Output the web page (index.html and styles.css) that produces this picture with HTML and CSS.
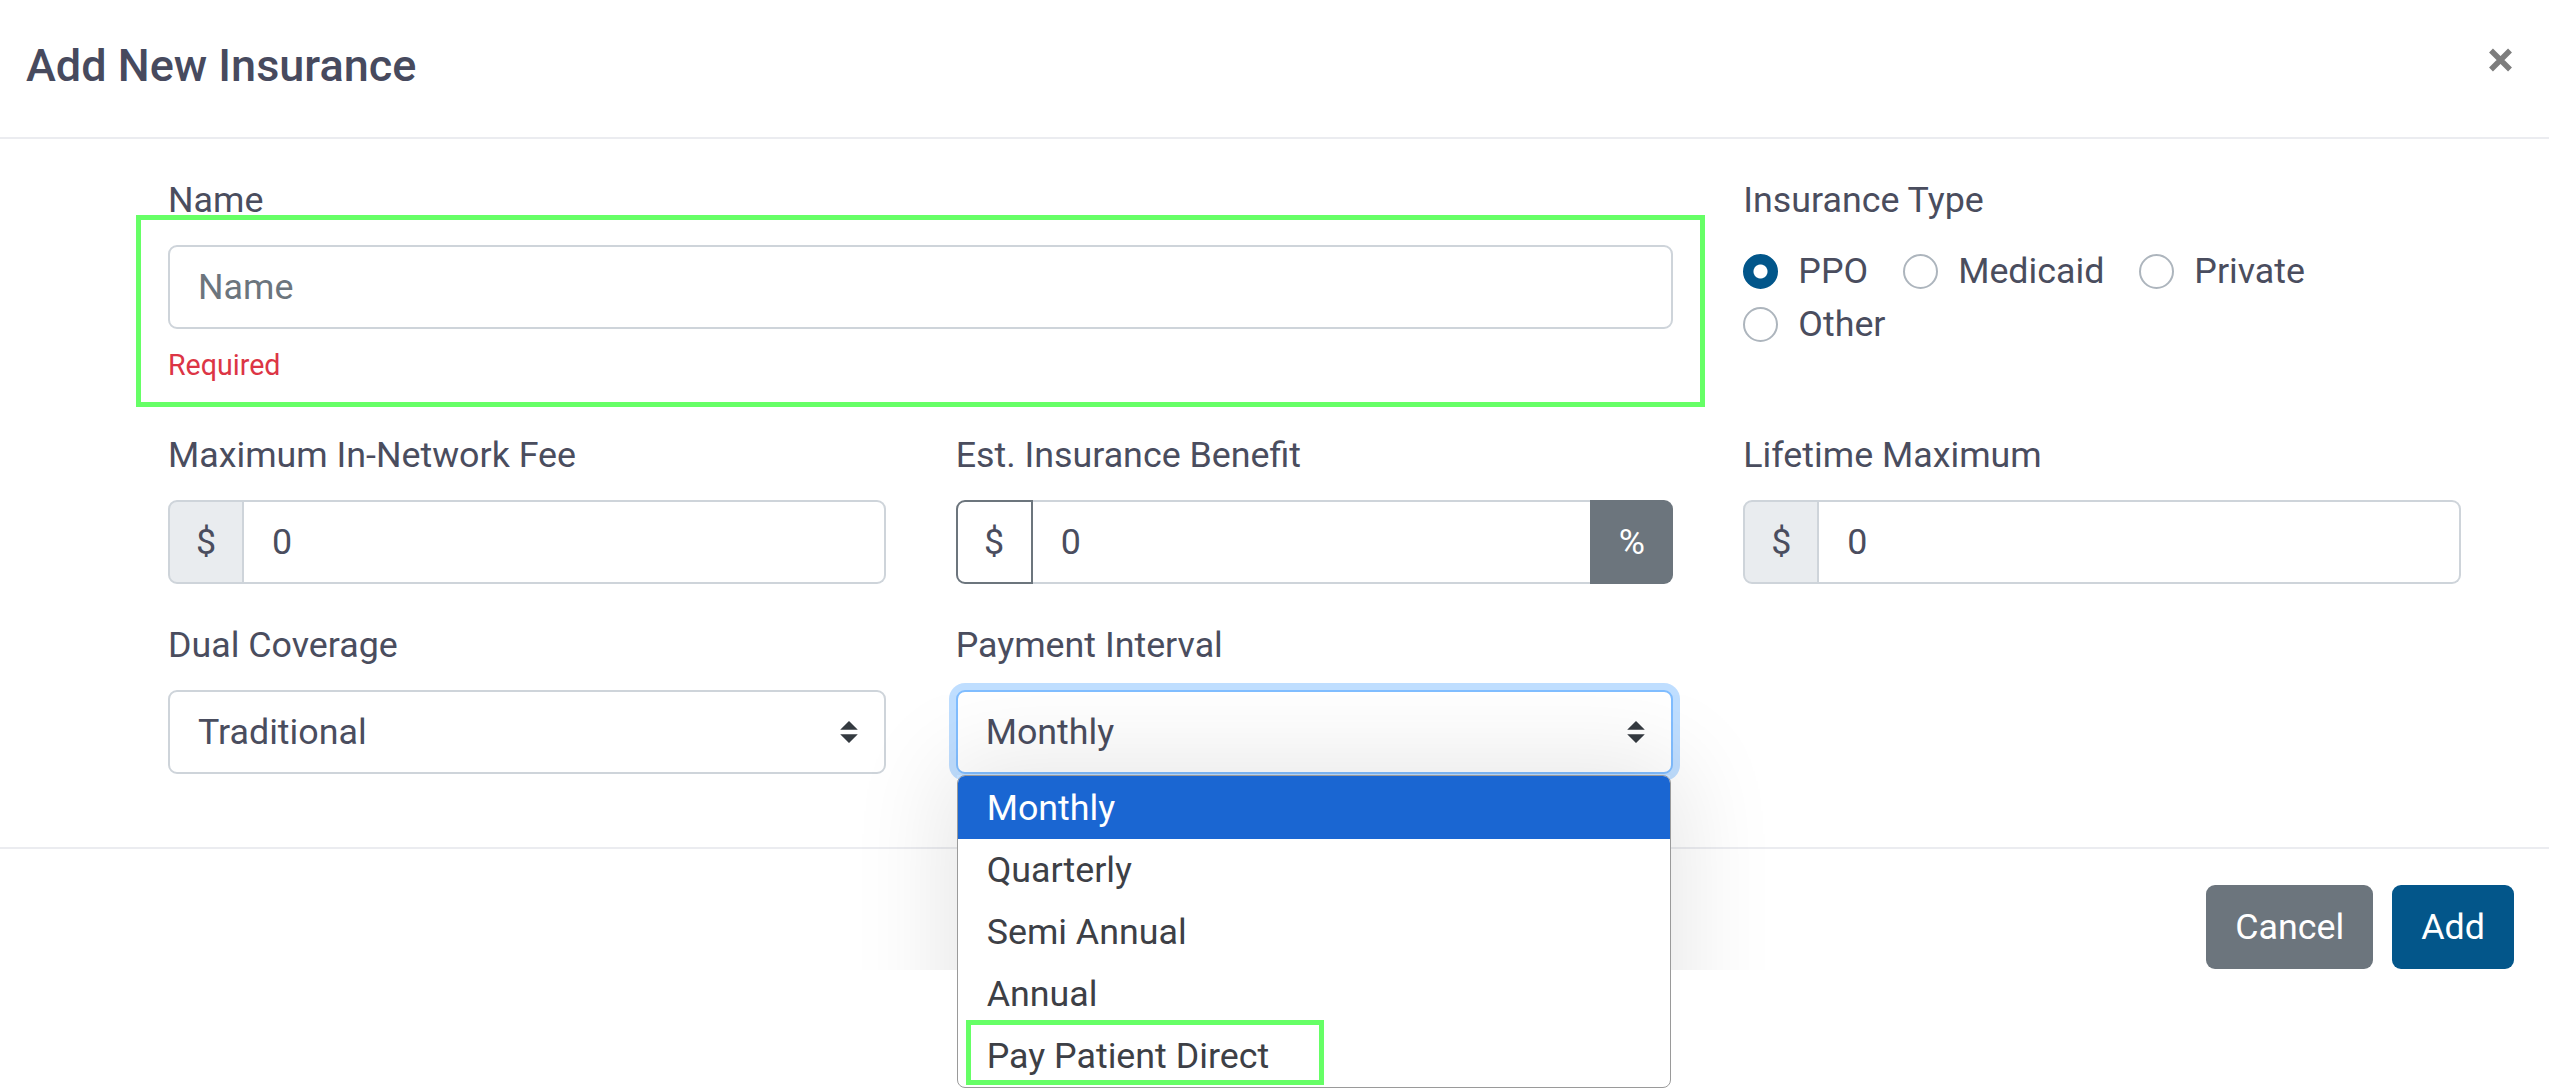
FILE: index.html
```html
<!DOCTYPE html>
<html lang="en">
  <head>
    <meta charset="UTF-8" />
    <meta name="viewport" content="width=device-width, initial-scale=1.0" />
    <title>Add New Insurance</title>
    <link rel="stylesheet" href="styles.css">
  </head>

  <body>
    <div class="modal">
      <div class="modal-header">
        <h1 class="modal-title">Add New Insurance</h1>
        <button class="close" type="button" aria-label="Close">
          <svg width="25" height="24" viewBox="0 0 25 24">
            <path d="M3 2.5L22 21.5M22 2.5L3 21.5" stroke="#7d7d7d" stroke-width="5.5" fill="none" />
          </svg>
        </button>
      </div>

      <div class="modal-body">
        <form class="form-grid">
          <div class="group group-wide">
            <label class="label" for="name">Name</label>
            <input class="control" id="name" type="text" placeholder="Name" />
            <div class="feedback">Required</div>
            <div class="mark mark-name"></div>
          </div>

          <div class="group">
            <span class="label">Insurance Type</span>
            <div class="radios">
              <div class="radio"><span class="dot checked"></span>PPO</div>
              <div class="radio"><span class="dot"></span>Medicaid</div>
              <div class="radio"><span class="dot"></span>Private</div>
              <div class="radio"><span class="dot"></span>Other</div>
            </div>
          </div>

          <div class="group">
            <label class="label" for="maxfee">Maximum In-Network Fee</label>
            <div class="input-group">
              <span class="addon">$</span>
              <input class="control" id="maxfee" type="text" value="0" />
            </div>
          </div>

          <div class="group">
            <label class="label" for="benefit">Est. Insurance Benefit</label>
            <div class="input-group">
              <span class="addon addon-outline">$</span>
              <input class="control control-mid" id="benefit" type="text" value="0" />
              <span class="addon addon-dark">%</span>
            </div>
          </div>

          <div class="group">
            <label class="label" for="lifetime">Lifetime Maximum</label>
            <div class="input-group">
              <span class="addon">$</span>
              <input class="control" id="lifetime" type="text" value="0" />
            </div>
          </div>

          <div class="group">
            <span class="label">Dual Coverage</span>
            <div class="control select">
              <span>Traditional</span>
              <svg class="caret" width="18" height="22" viewBox="0 0 4 5">
                <path d="M2 0L0 2h4zm0 5L0 3h4z" fill="#343a40" />
              </svg>
            </div>
          </div>

          <div class="group">
            <span class="label">Payment Interval</span>
            <div class="select-field">
              <div class="control select focused">
                <span>Monthly</span>
                <svg class="caret" width="18" height="22" viewBox="0 0 4 5">
                  <path d="M2 0L0 2h4zm0 5L0 3h4z" fill="#343a40" />
                </svg>
              </div>
              <div class="shade-clip"><div class="shade"></div></div>
              <div class="dropdown">
                <div class="option active">Monthly</div>
                <div class="option">Quarterly</div>
                <div class="option">Semi Annual</div>
                <div class="option">Annual</div>
                <div class="option">Pay Patient Direct</div>
                <div class="mark mark-option"></div>
              </div>
            </div>
          </div>
        </form>
      </div>

      <div class="modal-footer">
        <button class="btn btn-cancel" type="button">Cancel</button>
        <button class="btn btn-add" type="button">Add</button>
      </div>
    </div>
  </body>
</html>
```

FILE: styles.css
```css
html {
  overflow: hidden;
}
body {
  margin: 0;
  min-height: 1089px;
  background: #fff;
  font-family: Roboto, "Liberation Sans", Arial, sans-serif;
  color: #4a4d5e;
}
.modal {
  width: 2549px;
}
.modal-header {
  display: flex;
  justify-content: space-between;
  align-items: flex-start;
  padding: 33px 36px 38px 26px;
  border-bottom: 2px solid #ebecf0;
}
.modal-title {
  margin: 0;
  font-size: 45px;
  line-height: 66px;
  font-weight: 500;
  color: #474a5e;
}
.close {
  border: 0;
  background: none;
  padding: 0;
  margin-top: 15px;
  line-height: 0;
}
.modal-body {
  padding: 35px 88px 38px 168px;
}
.form-grid {
  display: grid;
  grid-template-columns: repeat(3, 1fr);
  column-gap: 70px;
  margin: 0;
}
.group {
  position: relative;
  margin-bottom: 35px;
}
.group-wide {
  grid-column: span 2;
  margin-bottom: 43px;
}
.label {
  display: block;
  font-size: 35.8px;
  line-height: 53px;
  margin-bottom: 18px;
}
.control {
  box-sizing: border-box;
  width: 100%;
  height: 84px;
  border: 2px solid #ced4da;
  border-radius: 9px;
  padding: 0 28px;
  background: #fff;
  font-family: Roboto, "Liberation Sans", Arial, sans-serif;
  font-size: 35.8px;
  color: #4a4d5e;
  outline: none;
}
.control::placeholder {
  color: #6c757d;
}
.feedback {
  margin-top: 15px;
  font-size: 28.6px;
  line-height: 42px;
  color: #dc3545;
}
.radios {
  display: flex;
  flex-wrap: wrap;
  column-gap: 35px;
}
.radio {
  display: flex;
  align-items: center;
  gap: 20px;
  font-size: 35.8px;
  line-height: 53px;
}
.dot {
  box-sizing: border-box;
  width: 35px;
  height: 35px;
  border-radius: 50%;
  border: 2px solid #adb5bd;
  background: #fff;
}
.dot.checked {
  border-color: #02568a;
  background: radial-gradient(circle, #fff 0 6.5px, #02568a 7.5px);
}
.input-group {
  display: flex;
}
.input-group .control {
  flex: 1;
  min-width: 0;
  border-left: 0;
  border-radius: 0 9px 9px 0;
}
.input-group .control-mid {
  border-right: 0;
  border-radius: 0;
}
.addon {
  box-sizing: border-box;
  width: 76px;
  height: 84px;
  display: flex;
  align-items: center;
  justify-content: center;
  border: 2px solid #ced4da;
  border-radius: 9px 0 0 9px;
  background: #e9ecef;
  font-size: 35.8px;
  color: #4a4d5e;
}
.addon-outline {
  width: 77px;
  background: #fff;
  border-color: #6c757d;
}
.addon-dark {
  width: 83px;
  border: 0;
  border-radius: 0 9px 9px 0;
  background: #6c757d;
  color: #fff;
}
.select {
  display: flex;
  align-items: center;
  justify-content: space-between;
  padding-right: 26px;
}
.focused {
  border-color: #80bdff;
  box-shadow: 0 0 0 7px rgba(0, 123, 255, 0.25);
}
.select-field {
  position: relative;
}
.shade-clip {
  position: absolute;
  top: 5px;
  left: -200px;
  right: -200px;
  height: 275px;
  overflow: hidden;
  pointer-events: none;
}
.shade {
  position: absolute;
  top: 80px;
  left: 201px;
  right: 203px;
  height: 400px;
  box-shadow: 0 0 90px 12px rgba(0, 0, 0, 0.1);
}
.dropdown {
  position: absolute;
  top: 85px;
  left: 1px;
  width: 714px;
  box-sizing: border-box;
  border: 1px solid #9a9a9a;
  border-radius: 8px;
  background: #fff;
  overflow: hidden;
}
.option {
  height: 62px;
  padding-left: 29px;
  display: flex;
  align-items: center;
  font-size: 35.8px;
  color: #3d4046;
}
.option.active {
  height: 63px;
  background: #1a66d2;
  color: #fff;
}
.mark {
  position: absolute;
  box-sizing: border-box;
  border: 5px solid #66ff66;
  pointer-events: none;
}
.mark-name {
  left: -32px;
  top: 41px;
  width: 1569px;
  height: 192px;
}
.mark-option {
  left: 8px;
  top: 244px;
  width: 358px;
  height: 65px;
}
.modal-footer {
  display: flex;
  justify-content: flex-end;
  gap: 19px;
  padding: 36px 35px;
  border-top: 2px solid #ebecf0;
}
.btn {
  height: 84px;
  padding: 0 29px;
  border: 0;
  border-radius: 9px;
  font-family: Roboto, "Liberation Sans", Arial, sans-serif;
  font-size: 35.8px;
  color: #fff;
}
.btn-cancel {
  background: #6c757d;
}
.btn-add {
  background: #03568a;
}
```
